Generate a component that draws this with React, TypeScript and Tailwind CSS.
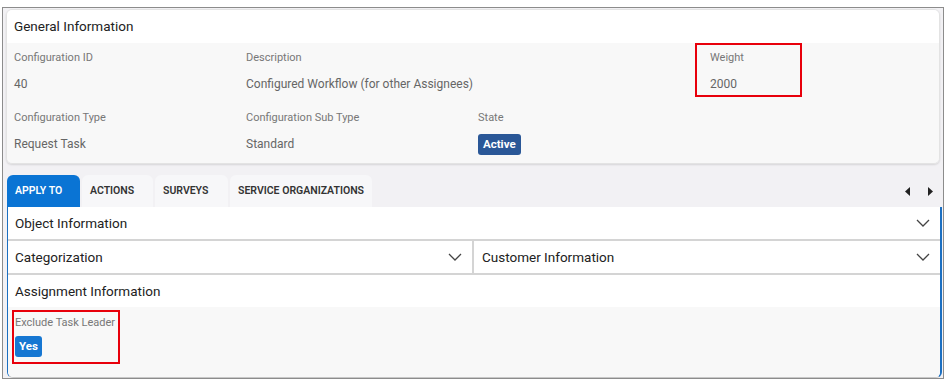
import React from 'react'

const FONT = { fontFamily: 'Roboto, "Noto Sans", sans-serif' }

function Chevron(): React.JSX.Element {
  return (
    <svg width="14" height="8" viewBox="0 0 14 8" fill="none" className="shrink-0">
      <path d="M1 1l6 6 6-6" stroke="#444" strokeWidth="1.3" />
    </svg>
  )
}

function Field({
  label,
  children
}: {
  label: string
  children: React.ReactNode
}): React.JSX.Element {
  return (
    <div className="flex flex-col">
      <div className="h-[18px] text-[11px] leading-[18px] text-[#777]">{label}</div>
      <div className="mt-[6px] flex h-[22px] items-center text-[12px] text-[#666]">{children}</div>
    </div>
  )
}

const TABS = ['APPLY TO', 'ACTIONS', 'SURVEYS', 'SERVICE ORGANIZATIONS']
const TAB_W = ['w-[73px]', 'w-[71px]', 'w-[73px]', 'w-[142px]']

export default function App(): React.JSX.Element {
  return (
    <div className="h-[380px] w-[946px] bg-white pt-[7px]" style={FONT}>
      <div className="mx-[2px] flex h-[372px] flex-col border border-[#8c8c8c] bg-[#f2f1f4]">
        {/* general information card */}
        <div className="mx-[3px] mt-[1px] overflow-hidden rounded-md border border-[#e3e3e3] shadow-[0_1px_2px_rgba(0,0,0,0.12)]">
          <div className="flex h-[33px] items-center bg-white px-[7px] text-[13.5px] text-[#222]">
            General Information
          </div>
          <div className="grid grid-cols-[232px_232px_232px_232px] gap-y-[14px] bg-[#f8f8f8] px-[7px] pb-[8px] pt-[6px]">
            <Field label="Configuration ID">40</Field>
            <Field label="Description">Configured Workflow (for other Assignees)</Field>
            <div />
            <div className="relative">
              <Field label="Weight">2000</Field>
              <div className="absolute left-[-15px] top-[-6px] h-[54px] w-[107px] border-2 border-[#e8000b]" />
            </div>
            <Field label="Configuration Type">Request Task</Field>
            <Field label="Configuration Sub Type">Standard</Field>
            <Field label="State">
              <span className="rounded-[3px] bg-[#2a5797] px-[5px] text-[11.5px] font-bold leading-[21px] text-white">
                Active
              </span>
            </Field>
          </div>
        </div>

        {/* tabs */}
        <div className="ml-[4px] mr-[1px] mt-[11px] flex h-[32px] items-end">
          {TABS.map((t, i) => (
            <div
              key={t}
              className={`mr-[2px] flex h-[32px] shrink-0 items-center whitespace-nowrap rounded-t-md px-[8px] text-[10.5px] font-semibold ${TAB_W[i]} ${
                i === 0 ? 'bg-[#0a74d4] text-white' : 'bg-[#f7f7f9] text-[#333]'
              }`}
            >
              {t}
            </div>
          ))}
          <div className="flex h-[32px] flex-1 items-center justify-end gap-[18px] pr-[9px]">
            <svg width="5" height="9" viewBox="0 0 5 9">
              <path d="M5 0v9L0 4.5z" fill="#222" />
            </svg>
            <svg width="5" height="9" viewBox="0 0 5 9">
              <path d="M0 0v9l5-4.5z" fill="#222" />
            </svg>
          </div>
        </div>

        {/* tab content */}
        <div className="ml-[4px] mr-[1px] flex flex-1 flex-col overflow-hidden rounded-b-md border-b border-l border-r-2 border-b-[#c8c8c8] border-l-[#1b6fc1] border-r-[#1b6fc1] bg-white">
          <div className="flex h-[34px] items-center justify-between border-b-2 border-[#d4d4d4] pl-[7px] pr-[10px] text-[13.5px] text-[#222]">
            <span>Object Information</span>
            <Chevron />
          </div>
          <div className="flex h-[34px] border-b-2 border-[#d4d4d4] text-[13.5px] text-[#222]">
            <div className="flex w-[466px] items-center justify-between border-r-2 border-[#d4d4d4] pl-[7px] pr-[10px]">
              <span>Categorization</span>
              <Chevron />
            </div>
            <div className="flex flex-1 items-center justify-between pl-[8px] pr-[10px]">
              <span>Customer Information</span>
              <Chevron />
            </div>
          </div>
          <div className="flex h-[32px] items-center pl-[7px] text-[13.5px] text-[#222]">
            Assignment Information
          </div>
          <div className="flex-1 bg-[#f8f8f8] pl-[7px] pt-[7px]">
            <div className="relative w-fit">
              <div className="h-[18px] text-[11px] leading-[18px] text-[#777]">Exclude Task Leader</div>
              <span className="mt-[4px] inline-block rounded-[3px] bg-[#1677d2] px-[4px] text-[11.5px] font-bold leading-[21px] text-white">
                Yes
              </span>
              <div className="absolute left-[-3px] top-[-4px] h-[54px] w-[108px] border-2 border-[#e8000b]" />
            </div>
          </div>
        </div>
      </div>
    </div>
  )
}
